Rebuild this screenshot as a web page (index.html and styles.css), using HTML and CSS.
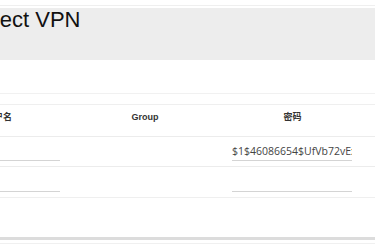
FILE: index.html
```html
<!DOCTYPE html>
<html>
<head>
<meta charset="utf-8">
<link rel="stylesheet" href="styles.css">
</head>
<body>
<div class="page">
  <div class="topline"></div>
  <div class="titlebar"><h1 class="title">Select VPN</h1></div>
  <div class="table">
    <div class="toolbar"></div>
    <div class="row head">
      <div class="cell c1">用户名</div>
      <div class="cell c2">Group</div>
      <div class="cell c3">密码</div>
    </div>
    <div class="row body">
      <div class="cell c1"><input class="field short" type="text" value=""></div>
      <div class="cell c2"></div>
      <div class="cell c3"><input class="field long" type="text" value="$1$46086654$UfVb72vEx"></div>
    </div>
    <div class="row body second">
      <div class="cell c1"><input class="field short" type="text" value=""></div>
      <div class="cell c2"></div>
      <div class="cell c3"><input class="field long" type="text" value=""></div>
    </div>
  </div>
  <div class="footer"></div>
</div>
</body>
</html>
```
FILE: styles.css
```css
html, body {
  margin: 0;
  padding: 0;
  background: #fff;
  overflow: hidden;
}
.page {
  margin-left: -40px;
  width: 415px;
  padding-top: 5px;
  font-family: "Liberation Sans", "Noto Sans CJK SC", sans-serif;
}
.topline {
  height: 1px;
  background: #efefef;
  margin-bottom: 2px;
}
.titlebar {
  height: 52px;
  background: #ededed;
  padding-left: 8px;
  padding-top: 1px;
  box-sizing: border-box;
}
.title {
  margin: 0;
  font-weight: normal;
  font-size: 22px;
  line-height: 22px;
  color: #111;
}
.table {
  margin-top: 33px;
  border-top: 1px solid #f1f1f1;
}
.toolbar {
  height: 10px;
}
.row {
  display: grid;
  grid-template-columns: 120px 130px 165px;
  border-top: 1px solid #efefef;
}
.row.head {
  height: 31px;
  font-size: 9px;
  font-weight: bold;
  color: #333;
  line-height: 12px;
}
.row.head .cell {
  padding-top: 6px;
}
.row.body {
  height: 29px;
  border-top: 1px solid #ececec;
}
.row.body .cell {
  padding-top: 5px;
}
.row.second {
  height: 30px;
  border-bottom: 1px solid #efefef;
}
.row.second .cell {
  padding-top: 6px;
}
.c1 {
  padding-left: 25px;
}
.c2, .c3 {
  text-align: center;
}
.row.body .c3 {
  text-align: left;
  padding-left: 22px;
}
.field {
  display: block;
  box-sizing: border-box;
  height: 19px;
  padding: 0;
  border: 0;
  border-bottom: 1px solid #d4d4d4;
  background: transparent;
  outline: none;
  font-family: "Open Sans", "Noto Sans", sans-serif;
  font-size: 10.5px;
  color: #444;
}
.field.short {
  width: 80px;
  margin-left: -5px;
}
.field.long {
  width: 120px;
}
.footer {
  margin-top: 39px;
  border-top: 3px solid #dcdcdc;
  height: 3px;
  border-bottom: 1px solid #f0f0f0;
}
```
